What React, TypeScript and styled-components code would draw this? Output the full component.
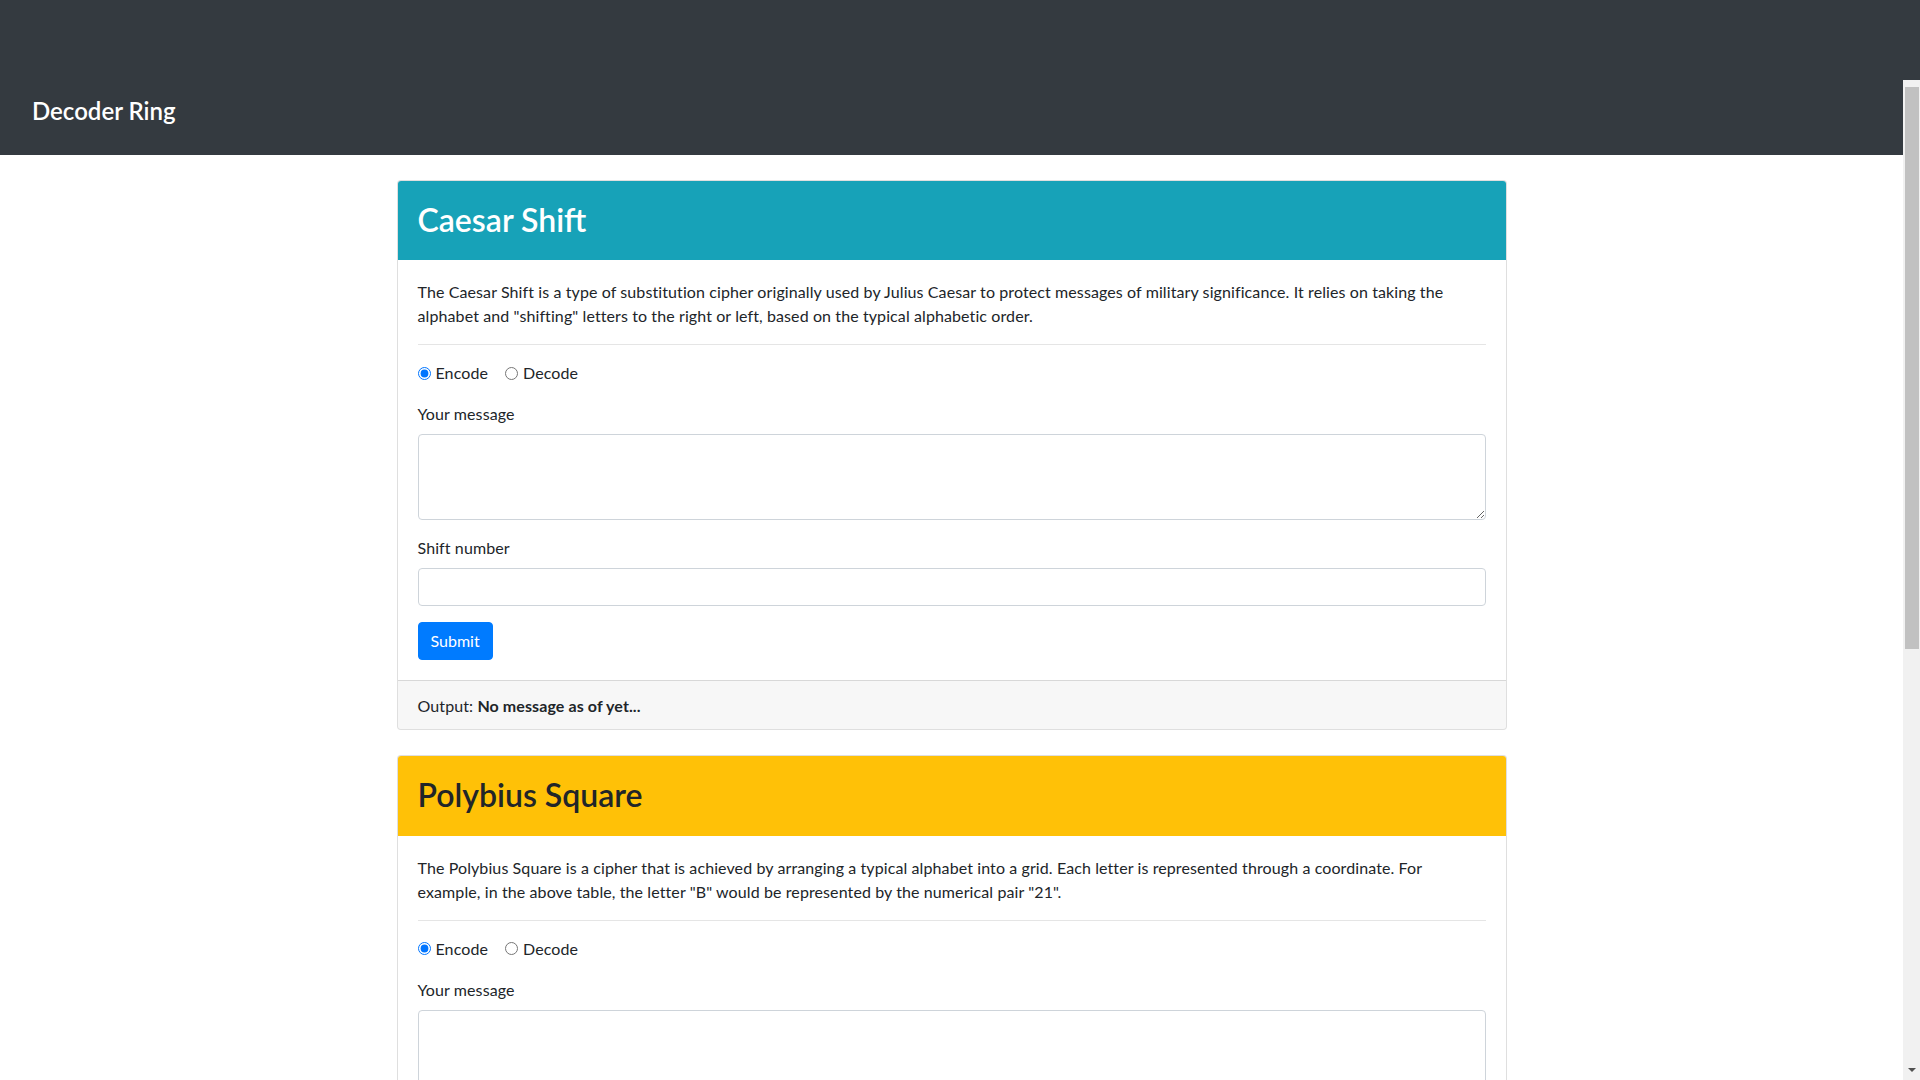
import styled, { createGlobalStyle } from "styled-components";

const GlobalStyle = createGlobalStyle`
  *, *::before, *::after { box-sizing: border-box; }
  html, body { margin: 0; padding: 0; height: 100%; overflow: hidden; }
  body {
    font-family: Lato, "Noto Sans", "Liberation Sans", sans-serif;
    font-size: 16px;
    line-height: 1.5;
    letter-spacing: 0.1px;
    color: #212529;
    background: #343a40;
  }
`;

const Shell = styled.div`
  height: 100vh;
  display: flex;
  flex-direction: column;
`;

// the dark band above the scrolling area
const TopBand = styled.div`
  height: 80px;
  flex: none;
  background: #343a40;
`;

const Viewport = styled.div`
  flex: 1;
  min-height: 0;
  display: flex;
`;

const Scroller = styled.main`
  flex: 1;
  overflow: hidden;
  background: #fff;
`;

const ScrollGutter = styled.div`
  width: 17px;
  flex: none;
  display: flex;
  flex-direction: column;
  background: #f1f1f1;
  padding-top: 7px;
`;

const ScrollThumb = styled.div<{ $size: number }>`
  height: ${(p) => p.$size}px;
  margin: 0 1px 0 2px;
  background: #c1c1c1;
`;

const ScrollArrow = styled.div`
  margin-top: auto;
  height: 17px;
  display: flex;
  align-items: center;
  justify-content: center;
  padding-bottom: 3px;

  &::after {
    content: "";
    border-style: solid;
    border-width: 4px 4px 0;
    border-color: #505050 transparent transparent;
  }
`;

const Navbar = styled.header`
  height: 75px;
  background: #343a40;
  padding: 17px 32px 0;
  display: flex;
  align-items: flex-start;
`;

const Brand = styled.div`
  color: #fff;
  font-size: 24px;
  font-weight: 600;
  line-height: 1.2;
  letter-spacing: 0;
`;

const Container = styled.div`
  width: 1140px;
  margin: 0 auto;
  padding: 0 15px 24px;
`;

const Card = styled.section`
  margin-top: 25px;
  border: 1px solid rgba(0, 0, 0, 0.125);
  border-radius: 4px;
  background: #fff;
  overflow: hidden;
`;

const CardHeader = styled.div<{ $bg: string; $fg: string }>`
  background: ${(p) => p.$bg};
  color: ${(p) => p.$fg};
  padding: 20px 20px 21px;
`;

const Title = styled.h2`
  margin: 0;
  font-size: 32px;
  font-weight: 600;
  line-height: 1.2;
  letter-spacing: 0;
`;

const CardBody = styled.div`
  padding: 20px;
`;

const Description = styled.p`
  margin: 0 0 16px;
`;

const Rule = styled.hr`
  margin: 0 0 16px;
  border: 0;
  border-top: 1px solid rgba(0, 0, 0, 0.1);
`;

const RadioRow = styled.div`
  display: flex;
  gap: 17px;
  margin-bottom: 17px;
`;

const RadioLabel = styled.label`
  display: inline-flex;
  align-items: center;
`;

const Radio = styled.input`
  width: 13px;
  height: 13px;
  margin: 0 5px 0 0;
  accent-color: #0075ff;
`;

const FormGroup = styled.div`
  margin-bottom: 16px;
`;

const FieldLabel = styled.label`
  display: block;
  margin-bottom: 8px;
`;

const fieldBase = `
  display: block;
  width: 100%;
  padding: 6px 12px;
  font: inherit;
  color: #495057;
  background: #fff;
  border: 1px solid #ced4da;
  border-radius: 4px;
  outline: none;
`;

const TextArea = styled.textarea`
  ${fieldBase}
  height: 86px;
  resize: vertical;
`;

const TextInput = styled.input`
  ${fieldBase}
  height: 38px;
`;

const SubmitButton = styled.button`
  display: inline-block;
  height: 38px;
  padding: 6px 12px;
  font: inherit;
  color: #fff;
  background: #007bff;
  border: 1px solid #007bff;
  border-radius: 4px;
  cursor: pointer;
`;

const CardFooter = styled.div`
  padding: 13px 20px 11px;
  background: rgba(0, 0, 0, 0.03);
  border-top: 1px solid rgba(0, 0, 0, 0.125);
`;

type Cipher = {
  id: string;
  title: string;
  bg: string;
  fg: string;
  text: string;
  extraLabel?: string;
};

const ciphers: Cipher[] = [
  {
    id: "caesar",
    title: "Caesar Shift",
    bg: "#17a2b8",
    fg: "#fff",
    text:
      'The Caesar Shift is a type of substitution cipher originally used by Julius Caesar to protect messages of military significance. It relies on taking the alphabet and "shifting" letters to the right or left, based on the typical alphabetic order.',
    extraLabel: "Shift number",
  },
  {
    id: "polybius",
    title: "Polybius Square",
    bg: "#ffc107",
    fg: "#212529",
    text:
      'The Polybius Square is a cipher that is achieved by arranging a typical alphabet into a grid. Each letter is represented through a coordinate. For example, in the above table, the letter "B" would be represented by the numerical pair "21".',
  },
];

const CipherCard = ({ c }: { c: Cipher }) => (
  <Card>
    <CardHeader $bg={c.bg} $fg={c.fg}>
      <Title>{c.title}</Title>
    </CardHeader>
    <CardBody>
      <Description>{c.text}</Description>
      <Rule />
      <RadioRow>
        <RadioLabel>
          <Radio type="radio" name={`${c.id}-mode`} defaultChecked />
          Encode
        </RadioLabel>
        <RadioLabel>
          <Radio type="radio" name={`${c.id}-mode`} />
          Decode
        </RadioLabel>
      </RadioRow>
      <FormGroup>
        <FieldLabel htmlFor={`${c.id}-message`}>Your message</FieldLabel>
        <TextArea id={`${c.id}-message`} />
      </FormGroup>
      {c.extraLabel && (
        <FormGroup>
          <FieldLabel htmlFor={`${c.id}-extra`}>{c.extraLabel}</FieldLabel>
          <TextInput id={`${c.id}-extra`} />
        </FormGroup>
      )}
      <SubmitButton type="button">Submit</SubmitButton>
    </CardBody>
    <CardFooter>
      Output: <strong>No message as of yet...</strong>
    </CardFooter>
  </Card>
);

export default function App() {
  return (
    <>
      <GlobalStyle />
      <Shell>
        <TopBand />
        <Viewport>
          <Scroller>
            <Navbar>
              <Brand>Decoder Ring</Brand>
            </Navbar>
            <Container>
              {ciphers.map((c) => (
                <CipherCard key={c.id} c={c} />
              ))}
            </Container>
          </Scroller>
          <ScrollGutter>
            <ScrollThumb $size={562} />
            <ScrollArrow />
          </ScrollGutter>
        </Viewport>
      </Shell>
    </>
  );
}
